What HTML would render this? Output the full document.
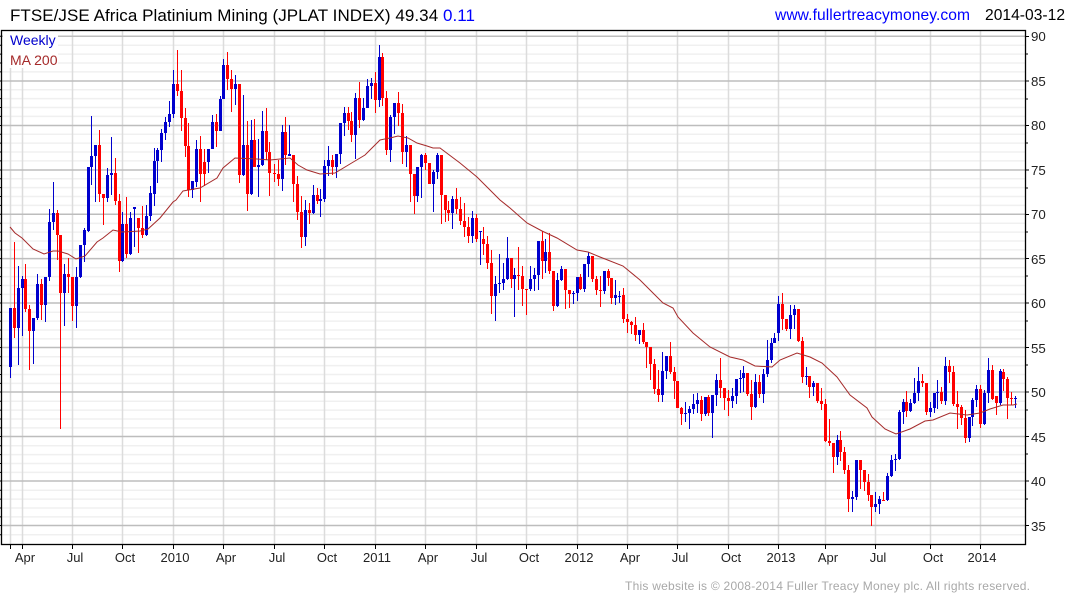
<!DOCTYPE html>
<html lang="en">
<head>
<meta charset="utf-8">
<title>FTSE/JSE Africa Platinium Mining</title>
<style>
html,body{margin:0;padding:0;background:#fff;width:1075px;height:600px;overflow:hidden}
svg{display:block;font-family:"Liberation Sans",Arial,sans-serif}
</style>
</head>
<body>
<svg width="1075" height="600" viewBox="0 0 1075 600" xmlns="http://www.w3.org/2000/svg">
<rect width="1075" height="600" fill="#fff"/>
<!-- minor horizontal grid -->
<path fill="none" stroke="#f0f0f0" stroke-width="1.5" d="M2 45.2H1025M2 54.1H1025M2 63H1025M2 71.9H1025M2 89.7H1025M2 98.6H1025M2 107.5H1025M2 116.4H1025M2 134.2H1025M2 143.1H1025M2 152H1025M2 160.9H1025M2 178.7H1025M2 187.6H1025M2 196.5H1025M2 205.4H1025M2 223.2H1025M2 232.1H1025M2 241H1025M2 249.9H1025M2 267.7H1025M2 276.6H1025M2 285.5H1025M2 294.4H1025M2 312.2H1025M2 321.1H1025M2 330H1025M2 338.9H1025M2 356.7H1025M2 365.6H1025M2 374.5H1025M2 383.4H1025M2 401.2H1025M2 410.1H1025M2 419H1025M2 427.9H1025M2 445.7H1025M2 454.6H1025M2 463.5H1025M2 472.4H1025M2 490.2H1025M2 499.1H1025M2 508H1025M2 516.9H1025M2 534.7H1025"/>
<!-- vertical grid -->
<path fill="none" stroke="#dcdcdc" stroke-width="1.5" d="M10.5 31V544M22.5 31V544M72.5 31V544M122.5 31V544M173.5 31V544M223.5 31V544M274.5 31V544M324.5 31V544M375.5 31V544M425.5 31V544M476.5 31V544M526.5 31V544M577.5 31V544M627.5 31V544M677.5 31V544M728.5 31V544M778.5 31V544M825.5 31V544M875.5 31V544M930.5 31V544M980.5 31V544"/>
<!-- major horizontal grid -->
<path fill="none" stroke="#bdbdbd" stroke-width="1.5" d="M2 36.3H1025M2 81H1025M2 125.5H1025M2 170H1025M2 214.3H1025M2 258.6H1025M2 303H1025M2 347.5H1025M2 392H1025M2 436.5H1025M2 481H1025M2 525.5H1025"/>
<rect x="3" y="31" width="55" height="37" fill="#fff"/>

<!-- blue wicks -->
<path fill="none" stroke="#0000cd" stroke-width="1" shape-rendering="crispEdges" d="M10.5 308V378M18.5 266V365M22.5 276V336M33.5 318V364M37.5 274V320M45.5 277V322M49.5 209V281M53.5 182V230M64.5 264V326M76.5 267V328M80.5 245V278M84.5 228V262M88.5 167V232M91.5 116V185M95.5 145V202M107.5 168V202M111.5 137V195M122.5 212V262M130.5 212V255M134.5 207V247M146.5 205V236M150.5 186V221M154.5 148V206M157.5 148V183M161.5 129V162M165.5 117V140M169.5 101V127M173.5 70V118M192.5 181V198M196.5 140V187M208.5 149V173M212.5 115V149M220.5 96V131M223.5 59V99M235.5 75V105M243.5 95V176M251.5 120V195M258.5 139V197M262.5 111V166M282.5 125V191M289.5 125V156M305.5 200V246M313.5 185V214M320.5 189V217M324.5 160V202M328.5 146V176M336.5 154V178M340.5 123V164M344.5 107V136M355.5 93V159M363.5 98V121M367.5 79V108M371.5 78V99M379.5 45V107M390.5 115V162M394.5 103V134M406.5 136V167M417.5 167V202M421.5 154V198M433.5 170V212M437.5 153V179M452.5 196V229M472.5 211V243M480.5 231V265M495.5 276V321M499.5 254V293M503.5 263V290M507.5 237V280M514.5 268V317M530.5 266V291M534.5 268V291M538.5 241V290M545.5 239V273M557.5 273V307M561.5 266V281M573.5 291V304M577.5 277V301M584.5 264V292M588.5 252V277M604.5 271V294M615.5 280V305M619.5 291V303M639.5 330V344M662.5 352V402M666.5 356V379M685.5 402V422M689.5 406V429M693.5 394V414M697.5 393V413M705.5 397V416M712.5 395V438M716.5 374V406M732.5 388V408M736.5 379V404M740.5 370V393M743.5 366V392M755.5 374V408M763.5 369V403M767.5 340V377M771.5 338V363M774.5 333V343M778.5 296V341M790.5 305V339M794.5 305V329M806.5 367V385M813.5 381V396M837.5 435V465M852.5 491V512M856.5 460V500M875.5 492V512M879.5 496V514M887.5 473V501M891.5 455V477M895.5 454V471M899.5 410V460M903.5 399V424M910.5 399V412M914.5 378V404M918.5 367V401M930.5 402V417M934.5 393V413M937.5 380V409M945.5 357V405M969.5 417V442M972.5 398V426M976.5 385V407M984.5 390V425M988.5 358V403M1000.5 369V405M1015.5 396V408"/>
<!-- blue bodies -->
<path fill="none" stroke="#0000cd" stroke-width="3" shape-rendering="crispEdges" d="M10.5 308V367M18.5 288V328M22.5 279V288M33.5 318V331M37.5 284V318M45.5 277V305M49.5 222V277M53.5 213V222M64.5 274V293M76.5 277V306M80.5 245V277M84.5 230V245M88.5 167V231M91.5 156V167M95.5 145V156M107.5 175V198M111.5 173V175M122.5 224V261M130.5 218V254M134.5 207V209M146.5 216V235M150.5 193V216M154.5 161V194M157.5 150V161M161.5 133V150M165.5 122V133M169.5 114V122M173.5 84V114M192.5 181V190M196.5 149V182M208.5 149V162M212.5 122V149M220.5 99V131M223.5 65V99M235.5 84V89M243.5 145V175M251.5 140V194M258.5 165V167M262.5 131V165M282.5 132V179M289.5 154V156M305.5 210V237M313.5 195V213M320.5 199V201M324.5 166V199M328.5 160V166M336.5 154V167M340.5 123V154M344.5 113V123M355.5 98V135M363.5 108V120M367.5 86V108M371.5 83V86M379.5 57V100M390.5 117V150M394.5 103V117M406.5 145V152M417.5 167V196M421.5 155V167M433.5 172V184M437.5 155V172M452.5 199V213M472.5 218V236M480.5 231V232M495.5 284V296M499.5 283V284M503.5 279V283M507.5 258V279M514.5 275V279M530.5 279V289M534.5 275V279M538.5 241V275M545.5 252V261M557.5 280V306M561.5 269V280M573.5 293V294M577.5 277V293M584.5 264V289M588.5 256V264M604.5 271V291M615.5 295V298M619.5 296V297M639.5 330V335M662.5 371V395M666.5 356V371M685.5 413V414M689.5 409V413M693.5 404V409M697.5 400V404M705.5 397V414M712.5 395V413M716.5 380V395M732.5 396V401M736.5 379V396M740.5 378V379M743.5 373V378M755.5 382V407M763.5 374V394M767.5 360V374M771.5 343V360M774.5 338V343M778.5 304V333M790.5 315V329M794.5 309V315M806.5 376V377M813.5 383V387M837.5 440V457M852.5 497V499M856.5 460V497M875.5 504V507M879.5 499V504M887.5 476V500M891.5 460V476M895.5 459V460M899.5 412V459M903.5 402V412M910.5 403V411M914.5 393V403M918.5 381V393M930.5 408V412M934.5 393V408M937.5 392V393M945.5 366V401M969.5 417V438M972.5 400V417M976.5 389V400M984.5 393V424M988.5 370V393M1000.5 371V403M1015.5 398V399"/>
<!-- red wicks -->
<path fill="none" stroke="#ff0000" stroke-width="1" shape-rendering="crispEdges" d="M14.5 242V338M25.5 264V312M29.5 305V370M41.5 279V320M57.5 210V260M60.5 235V429M68.5 258V293M72.5 277V321M99.5 130V202M103.5 194V225M115.5 158V205M119.5 194V272M126.5 197V258M138.5 218V253M142.5 206V238M177.5 50V96M181.5 70V131M185.5 108V157M188.5 123V197M200.5 136V202M204.5 149V186M216.5 114V147M227.5 52V90M231.5 70V112M239.5 84V183M247.5 121V211M254.5 119V167M266.5 108V160M269.5 142V196M274.5 164V182M278.5 160V186M285.5 117V165M293.5 155V202M297.5 176V220M301.5 196V248M309.5 203V224M317.5 188V204M332.5 155V175M348.5 107V130M351.5 112V142M359.5 82V128M375.5 72V113M382.5 53V106M386.5 91V155M398.5 92V126M402.5 104V164M410.5 145V202M414.5 174V214M425.5 153V170M429.5 163V184M441.5 155V224M445.5 195V222M448.5 201V221M456.5 188V214M460.5 197V225M464.5 203V237M468.5 217V243M476.5 214V242M483.5 227V255M487.5 236V269M491.5 250V314M511.5 258V288M518.5 247V290M522.5 266V306M526.5 289V315M542.5 231V279M549.5 233V274M553.5 271V311M565.5 269V309M569.5 290V308M580.5 274V290M592.5 256V282M596.5 276V295M600.5 276V307M608.5 269V286M611.5 278V304M623.5 288V323M627.5 314V333M631.5 321V334M635.5 317V341M643.5 323V344M646.5 342V368M650.5 347V380M654.5 359V394M658.5 370V402M670.5 342V374M674.5 367V399M677.5 381V408M681.5 407V425M701.5 396V421M708.5 395V416M720.5 358V398M724.5 388V410M728.5 390V416M747.5 373V396M751.5 380V420M759.5 375V398M782.5 293V330M786.5 319V331M798.5 309V342M802.5 337V383M809.5 376V398M817.5 383V403M821.5 388V410M825.5 399V442M829.5 419V446M833.5 443V473M840.5 431V461M844.5 447V474M848.5 465V512M860.5 460V489M864.5 470V491M868.5 474V501M871.5 495V526M883.5 492V501M906.5 391V417M922.5 374V387M926.5 383V415M941.5 387V404M949.5 360V383M953.5 366V406M957.5 391V429M961.5 405V425M965.5 410V443M980.5 385V428M992.5 365V400M996.5 396V415M1003.5 369V391M1007.5 377V419M1011.5 392V405"/>
<!-- red bodies -->
<path fill="none" stroke="#ff0000" stroke-width="3" shape-rendering="crispEdges" d="M14.5 308V328M25.5 279V309M29.5 309V331M41.5 284V305M57.5 213V235M60.5 235V293M68.5 274V277M72.5 277V306M99.5 145V194M103.5 194V198M115.5 173V201M119.5 201V261M126.5 224V254M138.5 218V228M142.5 228V235M177.5 84V91M181.5 91V118M185.5 118V146M188.5 146V190M200.5 149V174M204.5 162V174M216.5 122V131M227.5 65V79M231.5 79V89M239.5 84V175M247.5 145V194M254.5 140V167M266.5 131V152M269.5 152V173M274.5 173V174M278.5 174V179M285.5 132V155M293.5 155V184M297.5 184V212M301.5 212V237M309.5 210V213M317.5 195V201M332.5 160V167M348.5 113V121M351.5 121V135M359.5 98V120M375.5 83V100M382.5 57V98M386.5 98V150M398.5 103V113M402.5 113V152M410.5 145V174M414.5 174V196M425.5 155V163M429.5 163V184M441.5 155V195M445.5 195V210M448.5 210V213M456.5 199V209M460.5 209V221M464.5 221V227M468.5 227V236M476.5 218V239M483.5 239V244M487.5 244V263M491.5 263V296M511.5 258V279M518.5 275V276M522.5 276V289M526.5 289V290M542.5 241V261M549.5 252V271M553.5 271V306M565.5 269V290M569.5 290V294M580.5 277V289M592.5 256V279M596.5 279V290M600.5 290V291M608.5 271V278M611.5 278V298M623.5 295V319M627.5 319V322M631.5 322V325M635.5 325V335M643.5 330V342M646.5 342V347M650.5 347V364M654.5 364V389M658.5 389V395M670.5 356V372M674.5 372V381M677.5 381V408M681.5 408V414M701.5 400V414M708.5 397V413M720.5 380V388M724.5 388V398M728.5 398V401M747.5 373V394M751.5 394V407M759.5 382V394M782.5 304V319M786.5 319V329M798.5 309V341M802.5 341V377M809.5 376V387M817.5 383V401M821.5 401V404M825.5 404V441M829.5 441V443M833.5 443V457M840.5 440V452M844.5 452V470M848.5 470V499M860.5 460V470M864.5 470V482M868.5 482V495M871.5 495V507M883.5 500V501M906.5 402V411M922.5 381V383M926.5 383V412M941.5 392V401M949.5 366V372M953.5 372V404M957.5 404V407M961.5 407V418M965.5 418V438M980.5 389V424M992.5 370V399M996.5 396V403M1003.5 372V379M1007.5 379V398M1011.5 398V399"/>
<!-- MA 200 -->
<path fill="none" stroke="#a52a2a" stroke-width="1" d="M10 227L15 233L22 238L33 249L44 254L53 251L58 251L68 254L76 259L85 256L97 242L103 238L113 230L122 232L140 231L148 229L160 218L173 202L176 200L183 191L200 188L217 178L223 168L235 158L257 159L270 160L290 158L298 165L307 170L320 174L335 173L350 164L365 155L380 140L390 138L398 136L408 138L417 143L427 146L433 148L440 148L460 163L477 177L493 193L500 200L510 208L527 223L542 231L557 238L577 250L588 252L600 257L623 266L640 280L653 293L663 303L673 308L678 317L693 333L710 347L730 357L743 360L755 366L772 367L780 360L797 353L810 357L822 363L837 377L850 395L867 408L872 417L885 429L896 434L910 429L925 421L933 420L950 413L967 415L980 413L990 409L1003 405L1013 405L1017 404"/>
<!-- frame -->
<rect x="1.5" y="30.5" width="1024" height="514" fill="none" stroke="#000" stroke-width="1.3"/>
<!-- ticks -->
<path fill="none" stroke="#000" stroke-width="1" d="M0 36.3H2M0 45.2H2M0 54.1H2M0 63H2M0 71.9H2M0 81H2M0 89.7H2M0 98.6H2M0 107.5H2M0 116.4H2M0 125.5H2M0 134.2H2M0 143.1H2M0 152H2M0 160.9H2M0 170H2M0 178.7H2M0 187.6H2M0 196.5H2M0 205.4H2M0 214.3H2M0 223.2H2M0 232.1H2M0 241H2M0 249.9H2M0 258.6H2M0 267.7H2M0 276.6H2M0 285.5H2M0 294.4H2M0 303H2M0 312.2H2M0 321.1H2M0 330H2M0 338.9H2M0 347.5H2M0 356.7H2M0 365.6H2M0 374.5H2M0 383.4H2M0 392H2M0 401.2H2M0 410.1H2M0 419H2M0 427.9H2M0 436.5H2M0 445.7H2M0 454.6H2M0 463.5H2M0 472.4H2M0 481H2M0 490.2H2M0 499.1H2M0 508H2M0 516.9H2M0 525.5H2M0 534.7H2M1026 36.5H1029M1026 54H1028M1026 81H1029M1026 99H1028M1026 125.5H1029M1026 143H1028M1026 170H1029M1026 188H1028M1026 214.5H1029M1026 232H1028M1026 258.5H1029M1026 276H1028M1026 303H1029M1026 321H1028M1026 347.5H1029M1026 365H1028M1026 392H1029M1026 410H1028M1026 436.5H1029M1026 454H1028M1026 481H1029M1026 499H1028M1026 525.5H1029M10.5 545V549M22.5 545V549M72.5 545V549M122.5 545V549M173.5 545V549M223.5 545V549M274.5 545V549M324.5 545V549M375.5 545V549M425.5 545V549M476.5 545V549M526.5 545V549M577.5 545V549M627.5 545V549M677.5 545V549M728.5 545V549M778.5 545V549M825.5 545V549M875.5 545V549M930.5 545V549M980.5 545V549"/>

<!-- header text -->
<text x="10" y="21" font-size="17" fill="#000" textLength="465" lengthAdjust="spacing">FTSE/JSE Africa Platinium Mining (JPLAT INDEX) 49.34 <tspan fill="#0000ff">0.11</tspan></text>
<text x="775" y="20" font-size="15.6" fill="#0000ff" textLength="195" lengthAdjust="spacing">www.fullertreacymoney.com</text>
<text x="985" y="20" font-size="15.6" fill="#000" textLength="80" lengthAdjust="spacing">2014-03-12</text>
<text x="10" y="45" font-size="14" fill="#0000cd">Weekly</text>
<text x="10" y="65" font-size="14" fill="#a52a2a">MA 200</text>

<!-- y labels -->
<g font-size="13.3" fill="#222">
<text x="1031" y="41">90</text>
<text x="1031" y="86">85</text>
<text x="1031" y="130">80</text>
<text x="1031" y="175">75</text>
<text x="1031" y="219">70</text>
<text x="1031" y="264">65</text>
<text x="1031" y="308">60</text>
<text x="1031" y="353">55</text>
<text x="1031" y="397">50</text>
<text x="1031" y="442">45</text>
<text x="1031" y="486">40</text>
<text x="1031" y="531">35</text>
</g>
<!-- x labels -->
<g font-size="13" fill="#222" text-anchor="middle">
<text x="25" y="562">Apr</text>
<text x="75" y="562">Jul</text>
<text x="125" y="562">Oct</text>
<text x="175" y="562">2010</text>
<text x="226" y="562">Apr</text>
<text x="277" y="562">Jul</text>
<text x="327" y="562">Oct</text>
<text x="377" y="562">2011</text>
<text x="428" y="562">Apr</text>
<text x="479" y="562">Jul</text>
<text x="529" y="562">Oct</text>
<text x="579" y="562">2012</text>
<text x="630" y="562">Apr</text>
<text x="680" y="562">Jul</text>
<text x="731" y="562">Oct</text>
<text x="781" y="562">2013</text>
<text x="828" y="562">Apr</text>
<text x="878" y="562">Jul</text>
<text x="933" y="562">Oct</text>
<text x="982" y="562">2014</text>
</g>
<text x="625" y="590" font-size="12" fill="#a8a8a8" textLength="405" lengthAdjust="spacing">This website is © 2008-2014 Fuller Treacy Money plc. All rights reserved.</text>
</svg>
</body>
</html>
